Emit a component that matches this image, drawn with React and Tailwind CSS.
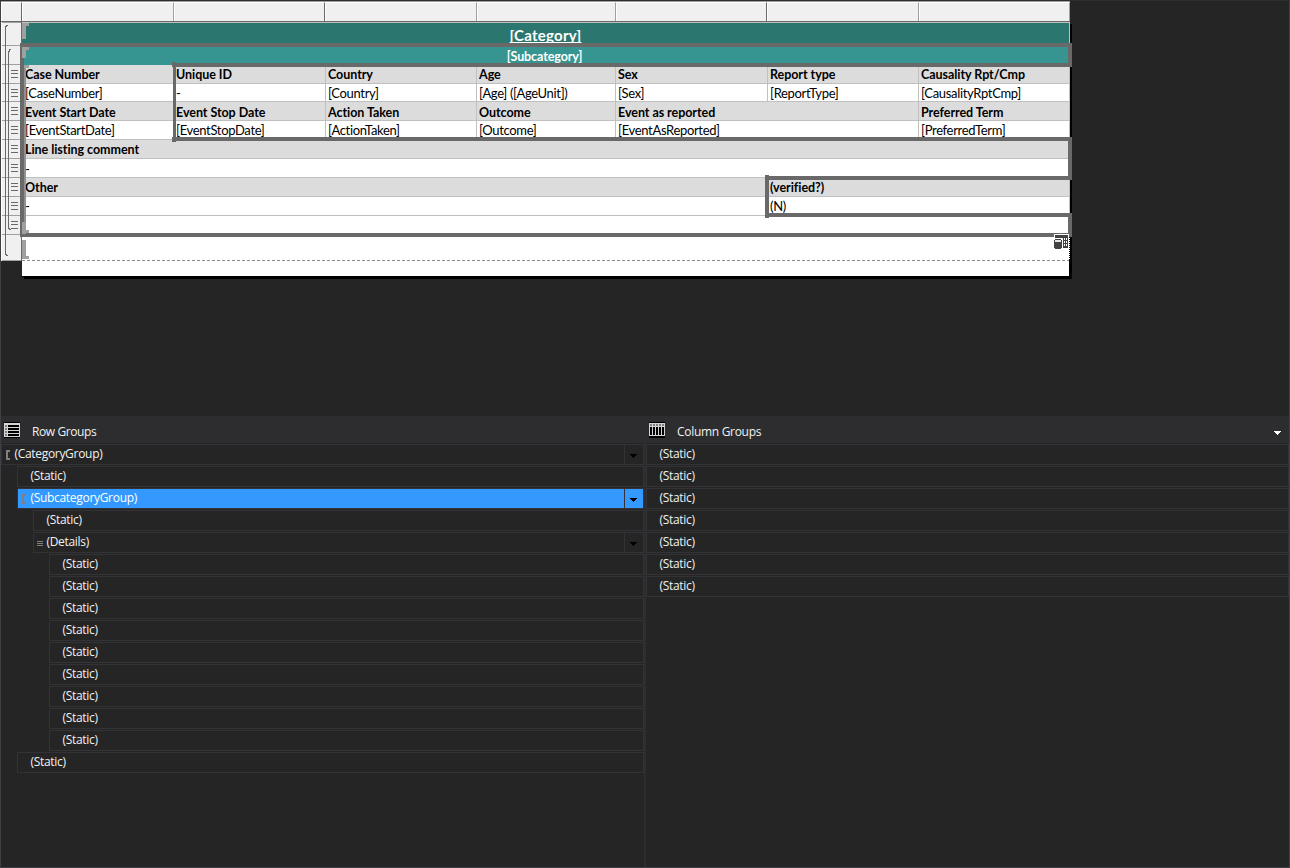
import clsx from "clsx";

const columns = [
  "w-[152px]",
  "w-[151px]",
  "w-[152px]",
  "w-[139px]",
  "w-[151px]",
  "w-[152px]",
  "w-[151px]",
];

const rowHandles = [
  { h: "h-[23px]" },
  { h: "h-[19px]" },
  { h: "h-[19px]", detail: true },
  { h: "h-[18px]", detail: true },
  { h: "h-[19px]", detail: true },
  { h: "h-[19px]", detail: true },
  { h: "h-[19px]", detail: true },
  { h: "h-[19px]", detail: true },
  { h: "h-[19px]", detail: true },
  { h: "h-[19px]", detail: true },
  { h: "h-[19px]", detail: true },
  { h: "h-[26px]" },
];

const cellWidths = ["w-[152px]", "w-[152px]", "w-[151px]", "w-[139px]", "w-[152px]", "w-[151px]", "w-[151px]"];
const wideWidths = ["w-[152px]", "w-[152px]", "w-[151px]", "w-[139px]", "w-[303px]", "w-[151px]"];

const detailRows = [
  {
    header: true,
    h: "h-[19px]",
    clip: "h-[17px] leading-[20px]",
    widths: cellWidths,
    cells: ["Case Number", "Unique ID", "Country", "Age", "Sex", "Report type", "Causality Rpt/Cmp"],
  },
  {
    h: "h-[18px]",
    clip: "h-[16px] leading-[18px]",
    widths: cellWidths,
    cells: ["[CaseNumber]", "-", "[Country]", "[Age] ([AgeUnit])", "[Sex]", "[ReportType]", "[CausalityRptCmp]"],
  },
  {
    header: true,
    h: "h-[19px]",
    clip: "h-[18px] leading-[22px]",
    widths: wideWidths,
    cells: ["Event Start Date", "Event Stop Date", "Action Taken", "Outcome", "Event as reported", "Preferred Term"],
  },
  {
    h: "h-[19px]",
    clip: "h-[18px] leading-[18px]",
    widths: wideWidths,
    cells: ["[EventStartDate]", "[EventStopDate]", "[ActionTaken]", "[Outcome]", "[EventAsReported]", "[PreferredTerm]"],
  },
  {
    header: true,
    h: "h-[19px]",
    clip: "h-[18px] leading-[20px]",
    widths: ["w-[1048px]"],
    cells: ["Line listing comment"],
  },
  { h: "h-[19px]", clip: "h-[18px] leading-[20px]", widths: ["w-[1048px]"], cells: ["-"] },
  {
    header: true,
    h: "h-[19px]",
    clip: "h-[18px] leading-[20px]",
    widths: ["w-[746px]", "w-[302px]"],
    cells: ["Other", "(verified?)"],
  },
  { h: "h-[19px]", clip: "h-[18px] leading-[18px]", widths: ["w-[746px]", "w-[302px]"], cells: ["-", "(N)"] },
  { h: "h-[19px]", clip: "h-[18px]", widths: ["w-[1048px]"], cells: [""] },
];

const rowGroups = [
  { label: "(CategoryGroup)", level: 0, icon: "bracket", menu: true },
  { label: "(Static)", level: 1 },
  { label: "(SubcategoryGroup)", level: 1, icon: "bracket", menu: true, selected: true },
  { label: "(Static)", level: 2 },
  { label: "(Details)", level: 2, icon: "lines", menu: true },
  ...Array.from({ length: 9 }, () => ({ label: "(Static)", level: 3 })),
  { label: "(Static)", level: 1 },
];

const columnGroups = Array.from({ length: 7 }, () => ({ label: "(Static)" }));

const indents = ["ml-0", "ml-4", "ml-8", "ml-12"];

export default function App() {
  return (
    <div className="flex h-[868px] w-[1290px] flex-col overflow-hidden border border-[#3f3f46] border-t-[#2d2d30] bg-[#252526] font-['Open_Sans',sans-serif]">
      <div className="h-[415px]">
        <Designer />
      </div>

      <div className="flex h-[27px] bg-[#2d2d30] text-xs text-[#f1f1f1]">
        <div className="flex w-[645px] items-start pl-[3px]">
          <RowGroupsIcon />
          <span className="ml-3 pt-[7px] leading-[18px] tracking-[-0.4px]">Row Groups</span>
        </div>
        <div className="flex flex-1 items-start pl-[3px]">
          <ColumnGroupsIcon />
          <span className="ml-3 pt-[7px] leading-[18px] tracking-[-0.3px]">Column Groups</span>
          <Arrow className="mr-2 ml-auto mt-[15px] text-white" />
        </div>
      </div>

      {/* Grouping pane */}
      <div className="flex flex-1 text-xs text-[#f1f1f1]">
        <div className="flex w-[643px] flex-col gap-px pt-px">
          {rowGroups.map((group, i) => (
            <GroupRow key={i} {...group} />
          ))}
        </div>
        <div className="w-0.5 bg-[#2d2d30]" />
        <div className="flex flex-1 flex-col gap-px pt-px">
          {columnGroups.map((group, i) => (
            <GroupRow key={i} {...group} />
          ))}
        </div>
      </div>
    </div>
  );
}

function Designer() {
  return (
    <div className="relative w-[1071px] font-[Lato,sans-serif] text-[13px] text-black">
      {/* Column handles */}
      <div className="flex h-[21px] border-t border-b border-t-[#a0a0a0] border-b-[#696969] bg-[#f0f0f0]">
        <div className="w-[21px] border-t border-r border-l border-t-white border-r-[#696969] border-l-white" />
        {columns.map((width, i) => (
          <div
            key={i}
            className={clsx(
              width,
              "border-t border-r border-l border-t-white border-l-white",
              i === 1 || i === 4 ? "border-r-[#696969]" : "border-r-[#a0a0a0]"
            )}
          />
        ))}
        <div className="-mt-px -mb-px flex-1 bg-[#252526]" />
      </div>

      <div className="flex">
        {/* Row handles */}
        <div className="w-[21px] self-start border-r border-l border-r-[#696969] border-l-white bg-[#f0f0f0]">
          <div className="h-px bg-[#a0a0a0]" />
          {rowHandles.map((row, i) => (
            <div key={i} className={clsx(row.h, "flex justify-end border-b border-[#a0a0a0] pr-[3px]")}>
              {row.detail && <DetailLines />}
            </div>
          ))}
        </div>

        {/* Report body */}
        <div className="h-[257px] w-[1050px] bg-black pr-0.5 pb-[3px]">
          <div className="h-[254px] w-[1048px] bg-white">
            <div className="h-px bg-[#c0c0c0]" />
            <div className="h-[23px] border-r border-[#c0c0c0] bg-[#2b7770] pt-[3px] text-center text-[15px] font-bold text-white">
              <div className="h-[18px] overflow-hidden leading-[18px] tracking-[0.25px] underline decoration-1 underline-offset-1 [text-decoration-skip-ink:none]">
                [Category]
              </div>
            </div>
            <div className="h-[19px] bg-[#379591] pr-[3px] text-center font-bold text-white">
              <div className="h-[17px] overflow-hidden text-[12.5px] leading-[22px] tracking-[-0.1px]">
                [Subcategory]
              </div>
            </div>
            {detailRows.map((row, i) => (
              <div key={i} className={clsx(row.h, "flex", row.header ? "bg-[#dcdcdc] font-bold" : "bg-white")}>
                {row.cells.map((text, c) => (
                  <div
                    key={c}
                    className={clsx(
                      row.widths[c],
                      c === 0 ? "pl-[3px]" : "pl-0.5",
                      "border-r border-b border-[#c0c0c0]"
                    )}
                  >
                    <div
                      className={clsx(
                        "overflow-hidden whitespace-nowrap",
                        row.header ? "text-[12.5px] tracking-[-0.05px]" : "text-[13px] tracking-[-0.33px]",
                        row.clip
                      )}
                    >
                      {text}
                    </div>
                  </div>
                ))}
              </div>
            ))}
            <div className="h-[26px] border-b border-dashed border-[#8c8c8c]" />
          </div>
        </div>
      </div>

      <SelectionOverlay />
    </div>
  );
}

// Outline of the selected group, drawn over the tablix
function SelectionOverlay() {
  return (
    <svg
      className="pointer-events-none absolute -top-px -left-px"
      width="1074"
      height="282"
      shapeRendering="crispEdges"
      fill="none"
    >
      {/* page shadow corners */}
      <path d="M1070 22h3v2h-3zM21 277h3v2h-3z" fill="#252526" />
      <path d="M1070 24h2v255h-2zM1069 237h1v42h-1z" fill="#000" />

      <g fill="#696969">
        <path d="M21 43h1051v4H21zM173 63h899v4H173zM1068 43h4v24h-4z" />
        <path d="M173 63h3v78h-3zM172 62h4v5h-4zM172 137h4v5h-4zM173 137h899v4H173z" />
        <path d="M1068 137h4v43h-4zM766 176h306v4H766zM765 175h4v43h-4zM766 213h306v4H766z" />
        <path d="M1068 213h4v24h-4zM21 233h1051v4H21zM20 43h4v194h-4z" />
      </g>
      <path d="M24 67h2v165h-2z" fill="#8f9190" />
      <g fill="#a0a0a0">
        <path d="M22 23h4v16h-4zM22 23h7v3h-7z" />
        <path d="M22 47h4v11h-4zM22 47h7v3h-7z" />
        <path d="M24 65h5v3h-5zM22 222h4v12h-4zM22 230h7v3h-7z" />
        <path d="M22 240h4v19h-4zM22 256h7v3h-7z" />
      </g>

      {/* group brackets in the row handles */}
      <g stroke="#696969">
        <path d="M7.5 25.5h-1v1h-1v228h1v1h1" />
        <path d="M10.500 49.500h-1v2h-1v177h1v1h1" />
      </g>

      {/* data set marker */}
      <path d="M1054 234h15v14h-15z" fill="#fff" />
      <path d="M1055 235h13v3h-13zM1063 238h5v10h-5z" fill="#424242" />
      <path d="M1064 238h1v2h-1zM1066 238h1v2h-1zM1064 241h1v2h-1zM1066 241h1v2h-1zM1064 244h1v2h-1zM1066 244h1v2h-1z" fill="#fff" />
      <path d="M1054 240h8v8h-1v1h-6v-1h-1zM1055 239h6v1h-6z" fill="#424242" />
      <path d="M1055 240h6v2h-6z" fill="#e8e8e8" />
      <path d="M1069.500 238v22" stroke="#fff" strokeDasharray="1 1" />
    </svg>
  );
}

function DetailLines() {
  return (
    <svg className="mt-[5px]" width="7" height="8" shapeRendering="crispEdges">
      <path d="M0 .5h7M0 3.500h7M0 7.500h7" stroke="#696969" />
    </svg>
  );
}

function GroupRow({ label, level = 0, icon, menu, selected }) {
  return (
    <div
      className={clsx(
        indents[level],
        "flex h-[21px] shrink-0 border border-[#333337]",
        selected && "bg-[#3399ff] text-white"
      )}
    >
      <div className="flex w-3 items-start justify-end">
        {icon === "bracket" && (
          <svg className="mt-[5px] mr-1" width="4" height="10" shapeRendering="crispEdges">
            <path d="M0 0h4v2H2v6h2v2H0z" fill="#808080" />
          </svg>
        )}
        {icon === "lines" && (
          <svg className="mt-[8px] mr-[3px]" width="6" height="5" shapeRendering="crispEdges">
            <path d="M0 .5h6M0 2.500h6M0 4.500h6" stroke="#808080" />
          </svg>
        )}
      </div>
      <span className="pl-[0.4px] leading-[18px] tracking-[-0.3px]">{label}</span>
      {menu && (
        <div className="ml-auto w-[19px] border-l border-[#333337] pl-[5px]">
          <Arrow className="mt-[9px] text-black" />
        </div>
      )}
    </div>
  );
}

function Arrow({ className }) {
  return (
    <svg className={className} width="7" height="4" shapeRendering="crispEdges">
      <path d="M0 0h7v1H0zM1 1h5v1H1zM2 2h3v1H2zM3 3h1v1H3z" fill="currentColor" />
    </svg>
  );
}

function RowGroupsIcon() {
  return (
    <svg className="mt-[6px]" width="16" height="16" shapeRendering="crispEdges">
      <path d="M0 0h16v16H0z" fill="#000" />
      <path d="M0 1h16v14H0z" fill="#d4d4d4" />
      <path d="M4 3h11v2H4zM4 6h11v2H4zM4 9h11v2H4zM4 12h11v2H4z" fill="#000" />
      <path d="M1 3h2v2H1zM1 6h2v2H1zM1 9h2v2H1zM1 12h2v2H1z" fill="#808080" />
    </svg>
  );
}

function ColumnGroupsIcon() {
  return (
    <svg className="mt-[6px]" width="16" height="16" shapeRendering="crispEdges">
      <path d="M0 0h16v16H0z" fill="#000" />
      <path d="M0 1h16v13H0z" fill="#d4d4d4" />
      <path d="M1 5h2v8H1zM4 5h2v8H4zM7 5h2v8H7zM10 5h2v8h-2zM13 5h2v8h-2z" fill="#000" />
      <path d="M1 2h2v2H1zM4 2h2v2H4zM7 2h2v2H7zM10 2h2v2h-2zM13 2h2v2h-2z" fill="#808080" />
    </svg>
  );
}
